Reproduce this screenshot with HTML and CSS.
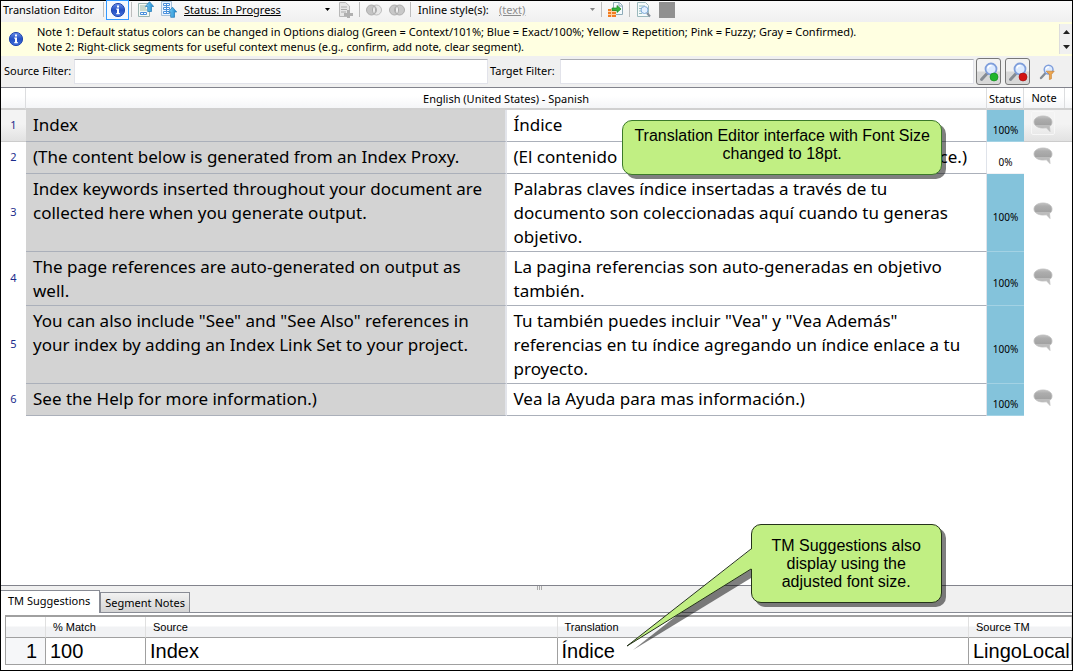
FILE: index.html
```html
<!DOCTYPE html>
<html lang="en">
<head>
<meta charset="utf-8">
<title>Translation Editor</title>
<link rel="stylesheet" href="styles.css">
</head>
<body>
<svg class="defs" width="0" height="0" aria-hidden="true">
  <defs>
    <linearGradient id="blue" x1="0" y1="0" x2="0" y2="1"><stop offset="0" stop-color="#6a8fe8"/><stop offset=".5" stop-color="#2350c4"/><stop offset="1" stop-color="#4472dd"/></linearGradient>
    <linearGradient id="arrow" x1="0" y1="0" x2="1" y2="0"><stop offset="0" stop-color="#7fd0f5"/><stop offset="1" stop-color="#1787cf"/></linearGradient>
    <linearGradient id="gray" x1="0" y1="0" x2="0" y2="1"><stop offset="0" stop-color="#c4c4c4"/><stop offset=".2" stop-color="#adadad"/><stop offset=".58" stop-color="#a2a2a2"/><stop offset=".6" stop-color="#bdbdbd"/><stop offset="1" stop-color="#b8b8b8"/></linearGradient>
    <symbol id="info" viewBox="0 0 16 16"><circle cx="8" cy="8" r="6.600" fill="url(#blue)" stroke="#2449b0"/><path d="M7 3.500h2v2H7zM6.300 6.500H9V11h.8v1.200H6.300V11H7V7.700h-.7z" fill="#fff"/></symbol>
    <symbol id="bubble" viewBox="0 0 20 17"><path d="M10 1C4.800 1 1 3.500 1 7s3.800 6 9 6l3.500-.2L17 16.500l-.5-5C18.200 10.500 19 9 19 7c0-3.500-3.800-6-9-6z" fill="url(#gray)" stroke="#bcbcbc" stroke-width=".8"/></symbol>
    <symbol id="lens" viewBox="0 0 20 20"><path d="M8.500 11 2.500 17.500" stroke="#858b93" stroke-width="3" stroke-linecap="round"/><circle cx="12" cy="7" r="5.500" fill="#dceaff" stroke="#7f9edb" stroke-width="1.800"/><path d="M9 6.500c0-2 1.500-3 3.500-3" fill="none" stroke="#fff" stroke-width="1.500"/></symbol>
  </defs>
</svg>

<main class="app">
  <header class="toolbar">
    <h1 class="title">Translation Editor</h1>
    <span class="sep"></span>
    <button class="tool tool-active" aria-label="Show notes"><svg width="16" height="16"><use href="#info"/></svg></button>
    <span class="sep"></span>
    <button class="tool" aria-label="Previous segment"><svg width="16" height="17" viewBox="0 0 16 17"><path d="M.5 2.500h11v13H.5z" fill="#f4faf4" stroke="#9cb5b2"/><path d="M2 5h6M2 7h6M2 9h7" stroke="#9cb7a5"/><path d="M2.500 11.500h6v2h-6zM5.500 11.500v2" fill="#fff" stroke="#4b91dd"/><path d="m11.500.7 4.200 4.800h-2.200v5h-3.800v-5H7.400z" fill="url(#arrow)" stroke="#2077b5" stroke-width=".7"/></svg></button>
    <button class="tool" aria-label="Next segment"><svg width="16" height="17" viewBox="0 0 16 17"><path d="M.5.5h10v14H.5z" fill="#eaf4ff" stroke="#a6c0d8"/><path d="M2.500 2.500h6v2h-6zM2.500 6.500h6v2h-6zM2.500 10.500h6v2h-6zM5.500 2.500v10" fill="#fff" stroke="#4b91dd"/><path d="m11.500 6.200 4.200 4.800h-2.200v5.300H9.700V11H7.400z" fill="url(#arrow)" stroke="#2077b5" stroke-width=".7"/></svg></button>
    <span class="combo combo-status"><select aria-label="Status"><option>Status: In Progress</option></select><svg width="5" height="3" viewBox="0 0 5 3"><path d="M0 0h5L2.500 3z" fill="#000"/></svg></span>
    <button class="tool" aria-label="Add document"><svg width="15" height="16" viewBox="0 0 15 16"><path d="M1.500.5h6l4 3.500v10.500h-10z" fill="#e6e6e6" stroke="#b8b8b8"/><path d="M3 5h6M3 7.500h6M3 10h5" stroke="#aaa"/><path d="M9 8h3v3h3v3h-3v2H9v-2H6v-3h3z" fill="#b0b0b0"/></svg></button>
    <span class="sep"></span>
    <button class="tool" aria-label="Merge segments"><svg width="16" height="12" viewBox="0 0 16 12"><circle cx="10.500" cy="6" r="5" fill="#e7e7e7" stroke="#bcbcbc"/><circle cx="5.500" cy="6" r="5" fill="#c4c4c4" stroke="#adadad"/><path d="M8 2c-2 2-2 6 0 8 2-2 2-6 0-8z" fill="#eee" stroke="#aaa"/></svg></button>
    <button class="tool" aria-label="Intersect segments"><svg width="16" height="12" viewBox="0 0 16 12"><circle cx="5.500" cy="6" r="5" fill="#c8c8c8" stroke="#adadad"/><circle cx="10.500" cy="6" r="5" fill="#c8c8c8" stroke="#adadad"/><path d="M8 2c-2 2-2 6 0 8 2-2 2-6 0-8z" fill="#f4f4f4" stroke="#aaa"/></svg></button>
    <span class="sep"></span>
    <label class="inline-label" for="inline-style">Inline style(s):</label>
    <span class="combo combo-inline"><select id="inline-style"><option>(text)</option></select><svg width="5" height="3" viewBox="0 0 5 3"><path d="M0 0h5L2.500 3z" fill="#888"/></svg></span>
    <span class="sep"></span>
    <button class="tool" aria-label="Apply suggestion"><svg width="17" height="16" viewBox="0 0 17 16"><path d="M6.500.5h6l3 3v9h-9z" fill="#f5fafd" stroke="#8eabb8"/><path d="M12 1v3h3" fill="none" stroke="#8eabb8"/><path d="M1 7h8v8H1z" fill="#f27c22"/><path d="M1 9.500h8M1 12.500h8M4.500 7v8" stroke="#ffd2a3"/><path d="M5 6h5V3.500L14 7l-4 3.500V8.500H5z" fill="#35b53c" stroke="#188624" stroke-width=".7"/></svg></button>
    <span class="sep"></span>
    <button class="tool" aria-label="Preview"><svg width="15" height="16" viewBox="0 0 15 16"><path d="M1.500.5h8l3 3v11h-11z" fill="#f5fafb" stroke="#9cb9bc"/><path d="M3 4h6M3 6.500h2M3 9h2M3 11.500h3" stroke="#8fb9bb"/><circle cx="8.500" cy="8" r="3.500" fill="#e4f1ff" stroke="#7da9d9"/><path d="m11 11 3 3.500" stroke="#84909e" stroke-width="2"/></svg></button>
    <button class="tool stop" aria-label="Stop"></button>
  </header>

  <section class="notes">
    <svg class="notes-icon" width="16" height="16"><use href="#info"/></svg>
    <div class="notes-text">
      <p>Note 1: Default status colors can be changed in Options dialog (Green = Context/101%; Blue = Exact/100%; Yellow = Repetition; Pink = Fuzzy; Gray = Confirmed).</p>
      <p>Note 2: Right-click segments for useful context menus (e.g., confirm, add note, clear segment).</p>
    </div>
    <div class="spin">
      <button aria-label="Scroll up"><svg width="7" height="4" viewBox="0 0 7 4"><path d="M0 4h7L3.500 0z" fill="#222"/></svg></button>
      <button aria-label="Scroll down"><svg width="7" height="4" viewBox="0 0 7 4"><path d="M0 0h7L3.500 4z" fill="#222"/></svg></button>
    </div>
  </section>

  <form class="filters">
    <label for="source-filter">Source Filter:</label>
    <input id="source-filter" type="text">
    <label for="target-filter">Target Filter:</label>
    <input id="target-filter" type="text">
    <button type="button" class="filter-btn framed" aria-label="Apply filter"><svg width="20" height="20"><use href="#lens"/><circle cx="15" cy="15" r="4" fill="#20b52c" stroke="#118a1c" stroke-width=".6"/></svg></button>
    <button type="button" class="filter-btn framed" aria-label="Clear filter"><svg width="20" height="20"><use href="#lens"/><circle cx="15" cy="15" r="4" fill="#d31313" stroke="#971010" stroke-width=".6"/></svg></button>
    <button type="button" class="filter-btn" aria-label="Filter options"><svg width="16" height="16" viewBox="0 0 20 20"><use href="#lens" width="20" height="20"/><path d="M9 9h10l-3.500 4v5.500l-2.500 1V13z" fill="#eea850" stroke="#c37a2c" stroke-width=".8"/></svg></button>
  </form>

  <section class="editor">
    <table class="segments">
      <colgroup><col class="c-num"><col><col><col class="c-status"><col class="c-note"></colgroup>
      <thead><tr><th></th><th colspan="2">English (United States) - Spanish</th><th>Status</th><th><span class="note-head">Note</span></th></tr></thead>
      <tbody>
        <tr class="current"><td class="num">1</td><td class="src">Index</td><td class="tgt">Índice</td><td class="status match">100%</td><td class="note"><button aria-label="Note 1"><svg width="20" height="17"><use href="#bubble"/></svg></button></td></tr>
        <tr><td class="num">2</td><td class="src">(The content below is generated from an Index Proxy.</td><td class="tgt"><div class="split"><span>(El contenido</span><span>ce.)</span></div></td><td class="status">0%</td><td class="note"><button aria-label="Note 2"><svg width="20" height="17"><use href="#bubble"/></svg></button></td></tr>
        <tr><td class="num">3</td><td class="src">Index keywords inserted throughout your document are collected here when you generate output.</td><td class="tgt">Palabras claves índice insertadas a través de tu documento son coleccionadas aquí cuando tu generas objetivo.</td><td class="status match">100%</td><td class="note"><button aria-label="Note 3"><svg width="20" height="17"><use href="#bubble"/></svg></button></td></tr>
        <tr><td class="num">4</td><td class="src">The page references are auto-generated on output as well.</td><td class="tgt">La pagina referencias son auto-generadas en objetivo también.</td><td class="status match">100%</td><td class="note"><button aria-label="Note 4"><svg width="20" height="17"><use href="#bubble"/></svg></button></td></tr>
        <tr><td class="num">5</td><td class="src">You can also include "See" and "See Also" references in your index by adding an Index Link Set to your project.</td><td class="tgt">Tu también puedes incluir "Vea" y "Vea Además" referencias en tu índice agregando un índice enlace a tu proyecto.</td><td class="status match">100%</td><td class="note"><button aria-label="Note 5"><svg width="20" height="17"><use href="#bubble"/></svg></button></td></tr>
        <tr><td class="num">6</td><td class="src">See the Help for more information.)</td><td class="tgt">Vea la Ayuda para mas información.)</td><td class="status match">100%</td><td class="note"><button aria-label="Note 6"><svg width="20" height="17"><use href="#bubble"/></svg></button></td></tr>
      </tbody>
    </table>
    <div class="callout callout-top">Translation Editor interface with Font Size changed to 18pt.</div>
  </section>

  <section class="panel">
    <div class="tabs" role="tablist">
      <button class="tab tab-on" role="tab" aria-selected="true">TM Suggestions</button>
      <button class="tab" role="tab" aria-selected="false">Segment Notes</button>
      <span class="grip"></span>
    </div>
    <div class="tm-wrap">
      <table class="tm">
        <colgroup><col class="t-num"><col class="t-match"><col><col><col class="t-tm"></colgroup>
        <thead><tr><th></th><th>% Match</th><th>Source</th><th>Translation</th><th>Source TM</th></tr></thead>
        <tbody><tr><td class="t-index">1</td><td>100</td><td>Index</td><td>Índice</td><td>LingoLocal</td></tr></tbody>
      </table>
    </div>
    <div class="callout callout-bottom">
      <svg class="tail" width="142" height="110" viewBox="0 0 142 110" aria-hidden="true">
        <path d="M125 12v21L7 105z" fill="#000" opacity=".5"/>
        <path d="M127 3 1 101 127 23z" fill="#c1ef83"/>
        <path d="M125 4 1 101 125 24" fill="none" stroke="#25331b"/>
      </svg>
      TM Suggestions also display using the adjusted font size.
    </div>
  </section>
</main>
</body>
</html>
```
FILE: styles.css
```css
* { box-sizing: border-box; }

body {
  margin: 0;
  font-family: "Noto Sans", "Open Sans", sans-serif;
  font-size: 11px;
  line-height: 15px;
  color: #000;
}

.defs { position: absolute; }

svg { display: block; flex: none; }

button {
  margin: 0;
  padding: 0;
  border: 0;
  background: none;
  font: inherit;
  color: inherit;
}

.app {
  display: flex;
  flex-direction: column;
  min-height: 100vh;
  border: 1px solid #000;
  background: #f0f0f0;
}

/* Toolbar */
.toolbar {
  display: flex;
  align-items: center;
  height: 21px;
  padding: 0 0 4px 2px;
  background: linear-gradient(#fafafa, #f0f0f0);
  white-space: nowrap;
}

.title { width: 94px; margin: 0 4px 0 0; font-size: 11px; line-height: 15px; font-weight: 400; }
.sep { width: 1px; height: 15px; margin: 0 2px; background: #bdbdbd; }
.tool { display: flex; align-items: center; justify-content: center; width: 23px; height: 20px; }
.tool-active { border: 1px solid #3399ff; background: #f4f9ff; }
.stop { width: 16px; height: 16px; margin-left: 4px; background: #919191; }

.combo { display: grid; align-items: center; }
.combo > * { grid-area: 1 / 1; }
.combo > svg { justify-self: end; margin-right: 4px; pointer-events: none; }
.combo select {
  appearance: none;
  width: 100%;
  padding: 0;
  border: 0;
  background: none;
  font: 11px/15px "Noto Sans", sans-serif;
  text-decoration: underline;
}
.combo-status { width: 150px; margin-left: 4px; }
.combo-inline { width: 100px; margin-left: 8px; }
.combo-inline select { color: #8d8d8d; }
.inline-label { width: 73px; margin-left: 5px; }

/* Notes */
.notes { display: flex; align-items: center; min-height: 34px; padding-left: 7px; background: #ffffe1; }
.notes-text { flex: 1; min-width: 0; margin-left: 13px; }
.notes p { margin: 0; }
.spin { display: flex; flex-direction: column; width: 13px; height: 30px; background: #f0f0f0; border-left: 1px solid #ddd; }
.spin button { flex: 1; display: flex; align-items: center; justify-content: center; }

/* Filters */
.filters { display: flex; align-items: center; height: 32px; padding: 0 13px 0 3px; border-bottom: 1px solid #82838c; }
.filters label { width: 70px; padding-bottom: 2px; white-space: nowrap; }
.filters input {
  flex: 1;
  min-width: 0;
  height: 25px;
  margin-right: 2px;
  padding: 0 4px;
  border: 1px solid #e2e3ea;
  border-top-color: #abadb3;
  background: #fff;
  font: inherit;
}
.filter-btn { display: flex; align-items: center; justify-content: center; width: 25px; height: 27px; }
.framed { margin-right: 4px; border: 1px solid #777; border-radius: 3px; background: linear-gradient(#f2f2f2 48%, #d8d8d8 52%); }

/* Segment grid */
.editor { position: relative; flex: 1; background: #fff; }
.segments { width: 100%; border-collapse: separate; border-spacing: 0; table-layout: fixed; }
.segments th {
  height: 22px;
  padding: 0;
  border-bottom: 2px solid #d0d0d0;
  border-right: 1px solid #dcdddf;
  background: linear-gradient(#fff 40%, #f4f5f7);
  font-weight: 400;
}
.segments th:last-child { padding-right: 7px; border-right: 0; }
.note-head { display: block; border-right: 1px solid #dcdddf; line-height: 20px; }
.c-num { width: 25px; }
.c-status { width: 37px; }
.c-note { width: 48px; }
.segments td { height: 32px; padding: 0; }
.segments .num { padding-bottom: 3px; color: #1c2c8c; text-align: center; }
.src, .tgt { border-bottom: 1px solid #abb0ba; font-size: 17px; line-height: 24px; }
.segments .src, .segments .tgt { padding: 3px 6px 2px 7px; vertical-align: top; }
.segments .src { padding-right: 20px; border-right: 2px solid #e2e4ea; background: #d3d3d3; }
.segments .tgt { border-right: 1px solid #dfe3ea; }
.split { display: flex; justify-content: space-between; padding-right: 13px; }
.segments .status { padding-top: 9px; border-bottom: 1px solid #f0f2f5; font-size: 10px; text-align: center; }
.segments .match { background: #84c3db; border-bottom-color: #a3d2e4; }
.segments .note { padding-bottom: 5px; }
.note button { display: flex; align-items: center; justify-content: center; width: 24px; height: 24px; margin-left: 7px; border: 1px solid transparent; border-radius: 2px; }
.current .num, .current .note { background: linear-gradient(#f3f3f3 45%, #e2e2e2); border-bottom: 1px solid #ccc; }
.current .note button { border-color: #f7f7f7; }

/* Suggestions panel */
.panel { position: relative; border-top: 1px solid #82838c; padding-bottom: 1px; background: #fff; }
.tabs { position: relative; display: flex; align-items: flex-end; height: 27px; padding-top: 4px; background: #f0f0f0; border-bottom: 1px solid #898c95; }
.tab { height: 20px; padding: 0 4px; border: 1px solid #898c95; border-bottom: 0; background: linear-gradient(#f2f2f2, #d4d4d4); white-space: nowrap; }
.tab-on { height: 23px; margin-bottom: -1px; padding: 0 9px 3px 7px; border-left: 0; background: #fff; }
.grip { position: absolute; top: 0; left: 50%; width: 6px; height: 4px; background: repeating-linear-gradient(90deg, #aaa 0 1px, transparent 1px 2px); }
.tm-wrap { padding: 2px 0 4px 4px; }
.tm { width: 100%; border-collapse: separate; border-spacing: 0; table-layout: fixed; border-top: 2px solid #a0a0a0; border-left: 1px solid #a0a0a0; font-family: "Liberation Sans", Arial, sans-serif; }
.tm th, .tm td { border-right: 1px solid #a0a0a0; border-bottom: 1px solid #a0a0a0; text-align: left; white-space: nowrap; }
.tm th { height: 21px; padding: 0 7px; border-right-color: #e0e0e0; background: linear-gradient(#fff 45%, #f1f2f4 50%); font-size: 11px; font-weight: 400; }
.tm td { height: 27px; padding: 0 4px; font-size: 20px; line-height: 24px; }
.tm .t-index { padding-right: 8px; background: #f6f7f9; text-align: right; }
.t-num { width: 40px; }
.t-match { width: 100px; }
.t-tm { width: 103px; }

/* Callouts */
.callout {
  position: absolute;
  z-index: 2;
  border: 1px solid #3c7a2a;
  border-radius: 10px;
  background: #c1ef83;
  box-shadow: 4px 4px 0 rgba(0, 0, 0, .5);
  font: 16px/18px "Liberation Sans", Arial, sans-serif;
  text-align: center;
}
.callout-top { top: 32px; left: 58%; width: 320px; padding: 6px 8px 11px; }
.callout-bottom { bottom: 67px; left: 70%; width: 191px; padding: 12px 18px 11px; border-color: #25331b; }
.tail { position: absolute; top: 20px; left: -126px; }
```
